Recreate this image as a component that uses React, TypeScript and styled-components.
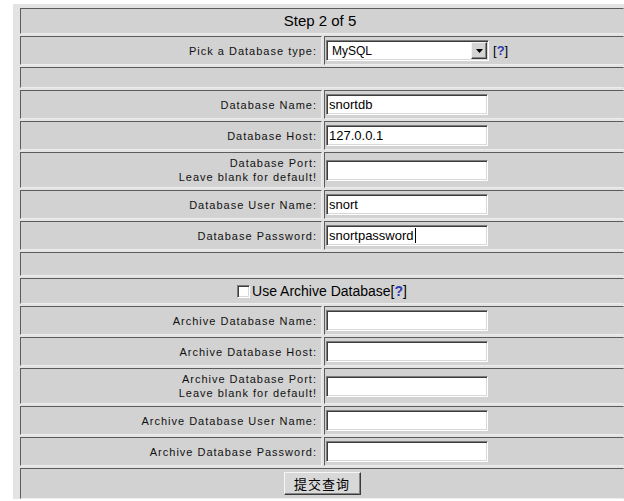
import React from "react";
import styled, { createGlobalStyle } from "styled-components";

const Global = createGlobalStyle`
  html, body {
    margin: 0;
    background: #ffffff;
    overflow: hidden;
  }
`;

const mainFields = [
  { label: ["Database Name:"], value: "snortdb" },
  { label: ["Database Host:"], value: "127.0.0.1" },
  { label: ["Database Port:", "Leave blank for default!"], value: "" },
  { label: ["Database User Name:"], value: "snort" },
  { label: ["Database Password:"], value: "snortpassword", caret: true },
];

const archiveFields = [
  { label: ["Archive Database Name:"], value: "" },
  { label: ["Archive Database Host:"], value: "" },
  { label: ["Archive Database Port:", "Leave blank for default!"], value: "" },
  { label: ["Archive Database User Name:"], value: "" },
  { label: ["Archive Database Password:"], value: "" },
];

const App = () => {
  return (
    <>
      <Global />
      <Frame>
        <Form>
          <Cell $span $center>
            <Title>Step 2 of 5</Title>
          </Cell>

          <LabelCell>
            <span>Pick a Database type:</span>
          </LabelCell>
          <Cell>
            <Select>
              <span>MySQL</span>
              <DropButton>
                <svg width="7" height="4" viewBox="0 0 7 4">
                  <path d="M0 0h7L3.5 4z" fill="#000" />
                </svg>
              </DropButton>
            </Select>
            <Help>
              [<b>?</b>]
            </Help>
          </Cell>

          <Cell $span $h={21} />

          {mainFields.map((f) => (
            <React.Fragment key={f.label[0]}>
              <LabelCell>
                {f.label.map((l) => (
                  <span key={l}>{l}</span>
                ))}
              </LabelCell>
              <Cell>
                <Field>
                  {f.value}
                  {f.caret && <Caret />}
                </Field>
              </Cell>
            </React.Fragment>
          ))}

          <Cell $span $h={24} />

          <Cell $span $center>
            <CheckRow>
              <Check />
              <span>Use Archive Database</span>
              <HelpInline>
                [<b>?</b>]
              </HelpInline>
            </CheckRow>
          </Cell>

          {archiveFields.map((f) => (
            <React.Fragment key={f.label[0]}>
              <LabelCell>
                {f.label.map((l) => (
                  <span key={l}>{l}</span>
                ))}
              </LabelCell>
              <Cell>
                <Field />
              </Cell>
            </React.Fragment>
          ))}

          <Cell $span $center>
            <Submit>提交查询</Submit>
          </Cell>
        </Form>
      </Frame>
    </>
  );
};

export default App;

const Frame = styled.div`
  margin: 4px 0 0 13px;
  padding: 4px 0 0 7px;
  background: #e3e3e3;
`;

const Form = styled.div`
  display: grid;
  grid-template-columns: 302px 1fr;
  gap: 2px;
`;

const Cell = styled.div<{ $span?: boolean; $center?: boolean; $h?: number }>`
  grid-column: ${(p) => (p.$span ? "1 / -1" : "auto")};
  display: flex;
  align-items: center;
  justify-content: ${(p) => (p.$center ? "center" : "flex-start")};
  box-sizing: border-box;
  min-height: ${(p) => (p.$h ? `${p.$h}px` : "0")};
  padding: 3px 1px;
  background: #d2d2d2;
  border: 1px solid;
  border-color: #5c5c5c #d2d2d2 #ededed #5c5c5c;
  font-family: "Liberation Sans", Arial, sans-serif;
  color: #000;
`;

const LabelCell = styled(Cell)`
  flex-direction: column;
  align-items: flex-end;
  justify-content: center;
  padding: 3px 4px 3px 1px;
  border-right-color: #ededed;
  font-size: 11px;
  line-height: 14px;
  letter-spacing: 1px;
  color: #111;
  text-align: right;
`;

const Title = styled.span`
  font-size: 15px;
  line-height: 18px;
  padding-right: 4px;
`;

const Field = styled.div`
  display: flex;
  align-items: center;
  box-sizing: border-box;
  width: 162px;
  height: 21px;
  padding-left: 2px;
  background: #fff;
  border: 1px solid;
  border-color: #7c7c7c #ffffff #ffffff #7c7c7c;
  box-shadow: inset 1px 1px 0 #3c3c3c, inset -1px -1px 0 #d8d8d8;
  font-family: "Liberation Sans", Arial, sans-serif;
  font-size: 13px;
  color: #000;
`;

const Caret = styled.span`
  display: inline-block;
  width: 1px;
  height: 15px;
  margin-left: 1px;
  background: #000;
`;

const Select = styled(Field)`
  width: 163px;
  justify-content: space-between;
  padding: 0 1px 0 5px;
  font-size: 12px;
`;

const DropButton = styled.div`
  display: flex;
  align-items: center;
  justify-content: center;
  box-sizing: border-box;
  width: 16px;
  height: 17px;
  background: #d4d4d4;
  border: 1px solid;
  border-color: #f4f4f4 #3c3c3c #3c3c3c #f4f4f4;
  box-shadow: inset -1px -1px 0 #868686;
`;

const Help = styled.span`
  margin-left: 4px;
  font-size: 13px;

  b {
    color: #2c3ab0;
  }
`;

const HelpInline = styled(Help)`
  margin-left: 0;
  font-size: 14px;
`;

const CheckRow = styled.div`
  display: flex;
  align-items: center;
  font-size: 14px;
  line-height: 18px;
`;

const Check = styled.div`
  box-sizing: border-box;
  width: 13px;
  height: 13px;
  margin-right: 2px;
  background: #fff;
  border: 1px solid;
  border-color: #7c7c7c #ffffff #ffffff #7c7c7c;
  box-shadow: inset 1px 1px 0 #3c3c3c, inset -1px -1px 0 #d8d8d8;
`;

const Submit = styled.button`
  box-sizing: border-box;
  width: 77px;
  height: 23px;
  padding: 0;
  background: #d8d8d8;
  border: 1px solid;
  border-color: #f6f6f6 #3a3a3a #3a3a3a #f6f6f6;
  box-shadow: inset -1px -1px 0 #858585;
  font-family: "Liberation Sans", "Noto Sans CJK SC", sans-serif;
  font-size: 13px;
  letter-spacing: 1px;
  color: #000;
`;
